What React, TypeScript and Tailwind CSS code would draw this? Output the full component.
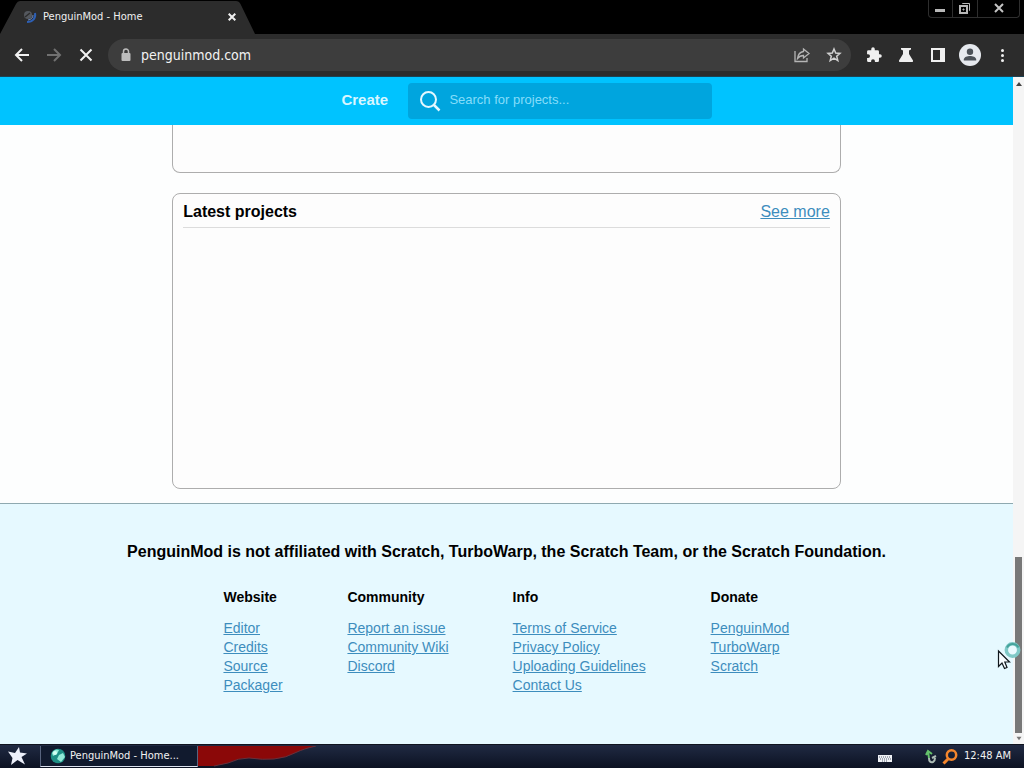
import React from 'react';

const columns = [
  { title: 'Website', width: 'min-w-[60px]', links: ['Editor', 'Credits', 'Source', 'Packager'] },
  { title: 'Community', width: 'min-w-[100px]', links: ['Report an issue', 'Community Wiki', 'Discord'] },
  { title: 'Info', width: 'min-w-[134px]', links: ['Terms of Service', 'Privacy Policy', 'Uploading Guidelines', 'Contact Us'] },
  { title: 'Donate', width: 'min-w-[79px]', links: ['PenguinMod', 'TurboWarp', 'Scratch'] },
];

function TabStrip() {
  return (
    <div className="flex h-[34px] shrink-0 items-start justify-between bg-black">
      <div className="relative h-full w-64">
        <svg className="absolute inset-0 h-full w-full" viewBox="0 0 256 34" preserveAspectRatio="none" aria-hidden="true">
          <path d="M0 34L16 4Q17.500 1 20 1H236Q239 1 240.500 4L255 34Z" fill="#2c2c2c" />
        </svg>
        <div className="relative flex h-full items-center pr-4 pl-[22px]">
          <svg className="h-4 w-4" viewBox="0 0 16 16" fill="none" aria-hidden="true">
            <circle cx="6" cy="6" r="4" fill="#54585e" />
            <path d="M3 8L8 4" stroke="#2c2c2c" strokeWidth="1.5" />
            <path d="M13 4C14 9 11 13 5 13" stroke="#2d5fb4" strokeWidth="2" />
            <path d="M11 6C11 9 9 10.500 6 11" stroke="#6d88b8" strokeWidth="1" />
          </svg>
          <span className="ml-[5px] flex-1 text-[11px] text-[#f0f0f0]">PenguinMod - Home</span>
          <button aria-label="Close tab" className="flex h-4 w-4 items-center justify-center">
            <svg className="h-2 w-2" viewBox="0 0 8 8" stroke="#f0f0f0" strokeWidth="2" aria-hidden="true">
              <path d="M.7.7L7.300 7.300M7.300.7L.7 7.300" />
            </svg>
          </button>
        </div>
      </div>
      <div className="mr-1 flex h-[18px] rounded-b-sm border border-t-0 border-[#2e2e2e]">
        <button aria-label="Minimize" className="flex w-6 items-center justify-center border-r border-[#2e2e2e]">
          <svg className="h-4 w-4" viewBox="0 0 16 16" aria-hidden="true"><path d="M2 8H12V11H2Z" fill="#b8b8b8" /></svg>
        </button>
        <button aria-label="Restore" className="flex w-[25px] items-center justify-center border-r border-[#2e2e2e]">
          <svg className="h-4 w-4" viewBox="0 0 16 16" fill="none" stroke="#b8b8b8" aria-hidden="true">
            <path d="M5.500 3V2.500H12.500V9.500H12" /><path d="M3 5H10V12H3Z" strokeWidth="2" /><path d="M6 8H7V9H6Z" />
          </svg>
        </button>
        <button aria-label="Close" className="flex w-[41px] items-center justify-center">
          <svg className="h-4 w-4" viewBox="0 0 16 16" stroke="#c4c4c4" strokeWidth="2" aria-hidden="true"><path d="M4 3L12 11M12 3L4 11" /></svg>
        </button>
      </div>
    </div>
  );
}

function Toolbar() {
  return (
    <div className="flex h-[43px] shrink-0 items-center border-b border-[#1c4254] bg-[#2c2c2c] pr-[14px] pl-3">
      <button aria-label="Back" className="mr-3 h-5 w-5">
        <svg viewBox="0 0 20 20" fill="none" stroke="#f2f2f2" strokeWidth="2" aria-hidden="true"><path d="M17 10H4M10 4L4 10L10 16" /></svg>
      </button>
      <button aria-label="Forward" className="mr-3 h-5 w-5">
        <svg viewBox="0 0 20 20" fill="none" stroke="#717171" strokeWidth="2" aria-hidden="true"><path d="M3 10H16M10 4L16 10L10 16" /></svg>
      </button>
      <button aria-label="Stop loading" className="h-5 w-5">
        <svg viewBox="0 0 20 20" fill="none" stroke="#f2f2f2" strokeWidth="2" aria-hidden="true"><path d="M4.500 4.500L15.500 15.500M15.500 4.500L4.500 15.500" /></svg>
      </button>
      <div className="ml-3 flex h-8 flex-1 items-center rounded-full bg-[#3d3d3d] pr-2 pl-[10px]">
        <svg className="h-4 w-4" viewBox="0 0 16 16" fill="none" aria-hidden="true">
          <path d="M5.500 7V4.500A2.500 2.500 0 0 1 10.500 4.500V7" stroke="#bdbdbd" strokeWidth="1.500" />
          <rect x="3.500" y="6" width="9" height="8" rx="1" fill="#bdbdbd" />
        </svg>
        <input aria-label="Address" defaultValue="penguinmod.com" className="ml-[7px] min-w-0 flex-1 bg-transparent text-[14px] text-[#f2f2f2] outline-none" />
        <button aria-label="Share" className="mr-[14px] h-[18px] w-[18px]">
          <svg viewBox="0 0 18 18" fill="none" stroke="#b5b5b5" strokeWidth="1.300" aria-hidden="true">
            <path d="M2 5V15.500H14V12" /><path d="M10.500 3L16 7.500L10.500 12V9.500C8 9.500 6 10.500 4.500 12.500C5 8.500 7 6 10.500 5.500Z" />
          </svg>
        </button>
        <button aria-label="Bookmark" className="h-[18px] w-[18px]">
          <svg viewBox="0 0 18 18" fill="none" stroke="#d0d0d0" strokeWidth="1.500" aria-hidden="true">
            <path d="M9 3L10.700 7L15 7.400L11.700 10.200L12.800 14.600L9 12.200L5.200 14.600L6.300 10.200L3 7.400L7.300 7Z" />
          </svg>
        </button>
      </div>
      <div className="ml-[13px] flex items-center gap-3">
        <button aria-label="Extensions" className="h-5 w-5">
          <svg viewBox="0 0 24 24" fill="#f0f0f0" aria-hidden="true"><path d="M20.500 11H19V7a2 2 0 0 0-2-2h-4V3.500a2.500 2.500 0 0 0-5 0V5H4a2 2 0 0 0-2 2v3.800h1.500a2.700 2.700 0 0 1 0 5.400H2V20a2 2 0 0 0 2 2h3.800v-1.500a2.700 2.700 0 0 1 5.400 0V22H17a2 2 0 0 0 2-2v-4h1.500a2.500 2.500 0 0 0 0-5z" transform="translate(2 2) scale(.84)" /></svg>
        </button>
        <button aria-label="Labs" className="h-5 w-5">
          <svg viewBox="0 0 20 20" fill="#f0f0f0" aria-hidden="true"><path d="M5 3H15V4.500L13 5.500V9L17 15.500Q17.500 17 16 17H4Q2.500 17 3 15.500L7 9V5.500L5 4.500Z" /></svg>
        </button>
        <button aria-label="Side panel" className="h-5 w-5">
          <svg viewBox="0 0 20 20" aria-hidden="true"><path fillRule="evenodd" d="M3 3H17V17H3ZM5 5V15H12V5Z" fill="#f0f0f0" /></svg>
        </button>
      </div>
      <button aria-label="Profile" className="ml-[10px] h-[24px] w-[24px]">
        <svg viewBox="0 0 24 24" aria-hidden="true"><circle cx="12" cy="12" r="11" fill="#e6e9ee" /><circle cx="12" cy="8.700" r="3.200" fill="#4b5158" /><path d="M5.800 17.500V16.500C5.800 14 9.500 13 12 13S18.200 14 18.200 16.500V17.500Z" fill="#4b5158" /></svg>
      </button>
      <button aria-label="Menu" className="ml-3 h-5 w-4">
        <svg viewBox="0 0 16 20" fill="#f0f0f0" aria-hidden="true"><circle cx="8.500" cy="5.500" r="1.500" /><circle cx="8.500" cy="10.500" r="1.500" /><circle cx="8.500" cy="15.500" r="1.500" /></svg>
      </button>
    </div>
  );
}

function SiteHeader() {
  return (
    <header className="flex h-12 shrink-0 items-center bg-[#00c3ff] pl-[33.7%]">
      <a href="#create" className="w-[67px] shrink-0 pb-0.5 text-[15px] font-bold text-[#d9f6ff]">Create</a>
      <label className="flex h-9 w-[304px] items-center rounded bg-[#00a5de] pl-[11px]">
        <svg className="h-[22px] w-[22px] shrink-0" viewBox="0 0 22 22" fill="none" stroke="#e4f8ff" strokeWidth="2" aria-hidden="true">
          <circle cx="9.500" cy="9.500" r="7.500" /><path d="M15 15L20.500 20.500" strokeWidth="2.500" />
        </svg>
        <input type="search" aria-label="Search for projects" placeholder="Search for projects..." className="ml-2 min-w-0 flex-1 bg-transparent pb-0.5 text-[13px] outline-none placeholder:text-[#86ddfa]" />
      </label>
    </header>
  );
}

function Footer() {
  return (
    <footer className="flex-1 border-t border-[#8fa9b0] bg-[#e6f9ff] pt-[38px]">
      <p className="text-center text-[16px] leading-5 font-bold">PenguinMod is not affiliated with Scratch, TurboWarp, the Scratch Team, or the Scratch Foundation.</p>
      <div className="mt-[26px] flex justify-center gap-16">
        {columns.map((column) => (
          <nav key={column.title} aria-label={column.title} className={column.width}>
            <h3 className="text-[14px] leading-[19px] font-bold">{column.title}</h3>
            <ul className="mt-3 text-[14px] leading-[19px] text-[#3d8dbd]">
              {column.links.map((link) => (
                <li key={link}><a href="#link" className="underline">{link}</a></li>
              ))}
            </ul>
          </nav>
        ))}
      </div>
    </footer>
  );
}

function Scrollbar() {
  return (
    <div className="flex w-[11px] shrink-0 flex-col items-center bg-[#f5f5f5]" aria-hidden="true">
      <svg className="mt-1 h-[6px] w-[6px]" viewBox="0 0 6 6"><path d="M3 1L6 5H0Z" fill="#444444" /></svg>
      <div className="flex-1" />
      <div className="h-[176px] w-[7px] bg-[#787878]" />
      <svg className="my-[3px] h-[5px] w-[6px]" viewBox="0 0 6 6"><path d="M0 1H6L3 5Z" fill="#777777" /></svg>
    </div>
  );
}

function Pointer() {
  return (
    <svg className="absolute right-0 bottom-[72px] h-[30px] w-[27px]" viewBox="0 0 27 30" fill="none" aria-hidden="true">
      <circle cx="15.500" cy="8" r="6.200" fill="#eafaff" stroke="#7fc9c7" strokeWidth="3.500" />
      <path d="M10 5.500A6.500 6.500 0 0 1 21.500 5.500" stroke="#45a39c" strokeWidth="2" />
      <path d="M1.500 9V24.500L5 21L7.500 26.500L10 25.500L7.800 20H12.500Z" fill="#f7fcff" stroke="#10171c" strokeWidth="1.200" />
    </svg>
  );
}

function Taskbar() {
  return (
    <div className="flex h-6 shrink-0 items-center border-t border-[#10141f] bg-linear-to-b from-[#202a43] to-[#0c1222] text-[11px] text-[#f2f2f2]">
      <button aria-label="Start" className="ml-[7px] h-5 w-5">
        <svg viewBox="0 0 20 20" fill="#edf0fa" aria-hidden="true"><path d="M12 0L13 5.500L20 6.500L14.500 10L18 17.500L10.500 13L4 18L5.500 11L1 4.500L8 6Z" /></svg>
      </button>
      <button className="ml-[13px] flex h-[21px] w-[158px] items-center border-x border-b border-x-[#58647e] border-b-[#dce2ef] bg-[#111a2e] pl-[9px]">
        <svg className="h-4 w-4" viewBox="0 0 16 16" aria-hidden="true"><circle cx="8" cy="8" r="7.300" fill="#1e8f85" /><path d="M2 5Q5 0 9 2L7 6L3 8ZM9 7L13 5L15 9L11 14L7 11Z" fill="#91ead7" /><circle cx="5" cy="5" r="2" fill="#d3fff3" /></svg>
        <span className="ml-1">PenguinMod - Home...</span>
      </button>
      <svg className="h-[22px] w-[124px]" viewBox="0 0 124 22" aria-hidden="true"><path d="M0 0H118Q105 3 99 6Q88 12 76 13Q65 14 51 12Q40 12 30 17L16 20H0Z" fill="#8b0808" /><path d="M16 20L30 17Q40 12 51 12Q65 14 76 13Q88 12 99 6Q105 3 118 0" fill="none" stroke="#66313c" /></svg>
      <div className="ml-auto flex items-center">
        <svg className="mt-1 h-[9px] w-[15px]" viewBox="0 0 15 9" aria-hidden="true"><path d="M1 1H15V8H1Z" fill="#f0f2f6" /><path d="M2 3H14M3 5H14M5 7H11" stroke="#555f73" strokeDasharray="1 1" /></svg>
        <svg className="ml-[31px] h-4 w-[14px]" viewBox="0 0 14 16" fill="none" aria-hidden="true"><path d="M3 6L5 2L9 5M5 3L6 9" stroke="#65c26b" strokeWidth="2" /><path d="M6 9Q6 14 10 13Q12 12 12 9M9 9L13 7" stroke="#adbcb5" strokeWidth="2" /></svg>
        <svg className="ml-[5px] h-4 w-4" viewBox="0 0 16 16" fill="none" stroke="#f5862c" aria-hidden="true"><circle cx="9.500" cy="6" r="4.700" strokeWidth="2.500" /><path d="M6 10L1.500 14.500" strokeWidth="3" /></svg>
        <span className="mr-[13px] ml-[6px]">12:48 AM</span>
      </div>
    </div>
  );
}

export default function App() {
  return (
    <div className="flex h-screen flex-col overflow-hidden bg-white font-['DejaVu_Sans_Condensed','DejaVu_Sans',sans-serif]">
      <TabStrip />
      <Toolbar />
      <div className="relative flex min-h-0 flex-1 font-['Liberation_Sans',Arial,sans-serif] text-black">
        <div className="flex min-w-0 flex-1 flex-col bg-[#fdfefe]">
          <SiteHeader />
          <main className="flex flex-col items-center gap-5 pb-[14px]">
            <section aria-label="Projects" className="h-12 w-[66%] rounded-b-lg border border-t-0 border-[#adadad] bg-[#fdfdfd]" />
            <section className="h-[296px] w-[66%] rounded-lg border border-[#adadad] bg-[#fdfdfd] px-[10px] pt-[7px]">
              <div className="flex items-center justify-between border-b border-[#dcdcdc] pb-[5px] leading-[21px]">
                <h2 className="text-[16px] font-bold">Latest projects</h2>
                <a href="#latest" className="text-[16px] text-[#3d8dbd] underline">See more</a>
              </div>
            </section>
          </main>
          <Footer />
        </div>
        <Scrollbar />
        <Pointer />
      </div>
      <Taskbar />
    </div>
  );
}
